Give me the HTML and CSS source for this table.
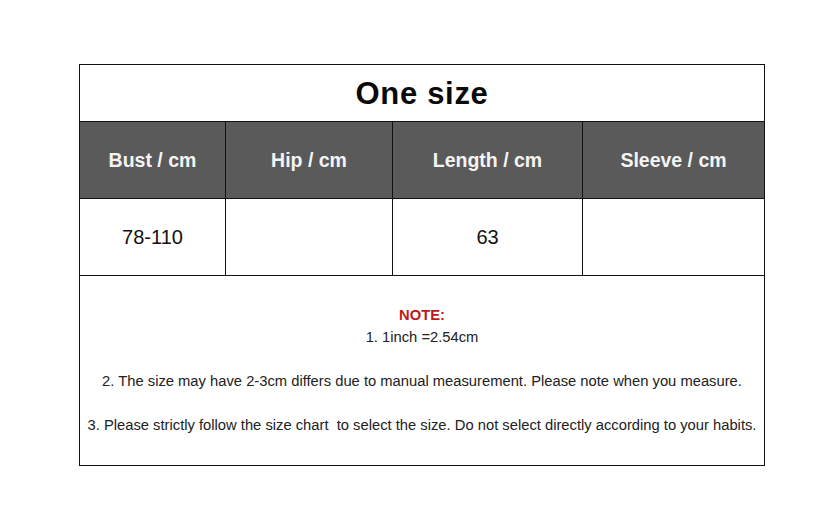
FILE: index.html
```html
<!DOCTYPE html>
<html>
<head>
<meta charset="utf-8">
<link rel="stylesheet" href="styles.css">
</head>
<body>
<div class="chart">
  <div class="title">One size</div>
  <div class="row head">
    <div class="cell">Bust / cm</div>
    <div class="cell">Hip / cm</div>
    <div class="cell">Length / cm</div>
    <div class="cell">Sleeve / cm</div>
  </div>
  <div class="row data">
    <div class="cell">78-110</div>
    <div class="cell"></div>
    <div class="cell">63</div>
    <div class="cell"></div>
  </div>
  <div class="notes">
    <p class="note-label">NOTE:</p>
    <p class="n1">1. 1inch =2.54cm</p>
    <p class="n2">2. The size may have 2-3cm differs due to manual measurement. Please note when you measure.</p>
    <p class="n3">3. Please strictly follow the size chart&nbsp; to select the size. Do not select directly according to your habits.</p>
  </div>
</div>
</body>
</html>
```

FILE: styles.css
```css
* { box-sizing: border-box; }
html, body { margin: 0; padding: 0; background: #fff; }
body {
  font-family: "Liberation Sans", Arial, sans-serif;
  color: #111;
  padding: 64px 0 0 79px;
}
.chart {
  width: 686px;
  border: 1px solid #111;
}
.title {
  height: 57px;
  display: flex;
  align-items: center;
  justify-content: center;
  font-size: 31px;
  font-weight: bold;
  letter-spacing: 0.7px;
  color: #0a0a0a;
  border-bottom: 1px solid #111;
  padding-top: 1px;
}
.row {
  display: grid;
  grid-template-columns: 145px 167px 190px 1fr;
  height: 77px;
  border-bottom: 1px solid #111;
}
.cell {
  display: flex;
  align-items: center;
  justify-content: center;
  border-left: 1px solid #111;
}
.cell:first-child { border-left: none; }
.head { background: #5a5a5a; }
.head .cell {
  color: #f4f4f4;
  font-weight: bold;
  font-size: 19.5px;
}
.data .cell {
  font-size: 20px;
  color: #111;
}
.notes {
  height: 189px;
  text-align: center;
  font-size: 14.75px;
  color: #222;
  padding-top: 28px;
}
.notes p { margin: 0; line-height: 22px; }
.note-label {
  color: #c01818;
  font-weight: bold;
}
.n2 { margin-top: 22px !important; }
.n3 { margin-top: 22px !important; }
```
